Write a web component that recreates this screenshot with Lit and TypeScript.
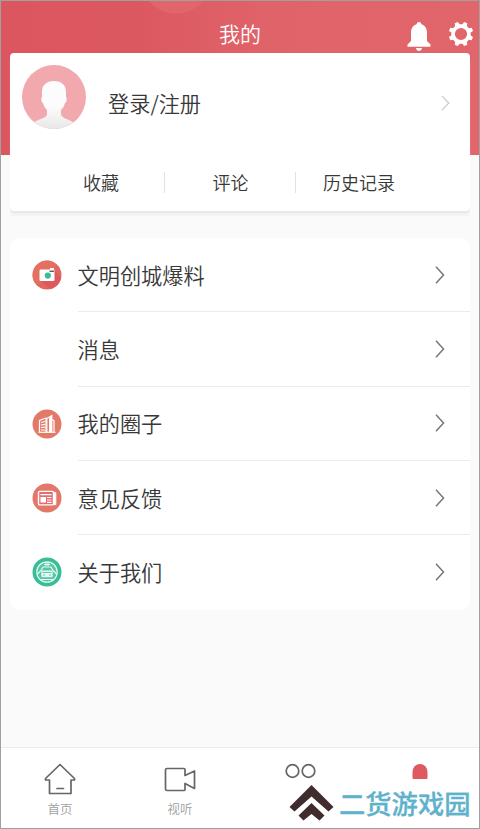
import { LitElement, html, css, svg } from "lit";
import { customElement } from "lit/decorators.js";

const camera = svg`
  <circle cx="15" cy="15" r="14.5" fill="#e1665f"/>
  <path d="M15 .5A14.5 14.5 0 0 0 5 25.500L25 5A14.500 14.500 0 0 0 15 .5Z" fill="#e5765f" opacity=".7"/>
  <path d="M22 10l7 8a14.500 14.500 0 0 1-11 11l-9-8z" fill="#dc5a5e"/>
  <rect x="7.500" y="9.500" width="15" height="11.500" rx="1.200" fill="#fff"/>
  <rect x="18" y="8" width="4" height="2" fill="#fff"/>
  <rect x="17.500" y="10.600" width="4.500" height="1.300" fill="#6b4044"/>
  <circle cx="15.800" cy="15.600" r="3.100" fill="#36bf98"/>`;

const towers = svg`
  <circle cx="15" cy="15" r="14.5" fill="#e37a68"/>
  <g fill="none" stroke="#fff" stroke-width="1.200">
    <path d="M7.500 23V11.500L14 9v14"/>
    <path d="M9 13.500l4-1M9 16l4-.7M9 18.500l4-.4M9 21h4"/>
    <path d="M14.800 23V9.500l5-3V23M20 10.500l2 1V23"/>
    <path d="M6.500 23.300h17"/>
  </g>
  <path d="M17 9l3-2v16h-3z" fill="#fff"/>`;

const paper = svg`
  <circle cx="15" cy="15" r="14.5" fill="#e37769"/>
  <rect x="6.500" y="8.400" width="15" height="13.500" rx="1.200" fill="#e66c72" stroke="#fff" stroke-width="1.400"/>
  <path d="M22 9.500h1.800v12.100H21.500" fill="#fff" stroke="#fff"/>
  <path d="M8.500 11.600h11M15 14.500h4.500M15 17h4.500M15 19.400h4.500" stroke="#fff" stroke-width="1.200"/>
  <rect x="8.500" y="14" width="5.500" height="5.500" fill="#fff"/>`;

const vehicle = svg`
  <circle cx="15" cy="15" r="14.5" fill="#38bd96"/>
  <circle cx="15" cy="15" r="10.200" fill="#54c8a6" stroke="#e6f8f2" stroke-width="1.200"/>
  <path d="M5.500 17l3.500-3.500 2-3.500h8l2 3.500 3.500 3.500" fill="none" stroke="#e6f8f2" stroke-width="1.200"/>
  <path d="M12 7.500h6M14 5v4M16 5v4" stroke="#e6f8f2"/>
  <rect x="9.300" y="13.500" width="11.400" height="6.700" rx="1.200" fill="#e6f8f2"/>
  <path d="M11 18h2M17 18h2M10.500 15.500h9" stroke="#38bd96" stroke-width=".8"/>
  <path d="M8 22.500h14" stroke="#e6f8f2"/>`;

const entries = [
  { label: "文明创城爆料", icon: camera },
  { label: "消息", icon: null },
  { label: "我的圈子", icon: towers },
  { label: "意见反馈", icon: paper },
  { label: "关于我们", icon: vehicle },
];

const gearPath = (() => {
  const points: string[] = [];
  for (let i = 0; i < 8; i++) {
    for (const [offset, radius] of [[-14, 9.8], [-8, 12.4], [8, 12.4], [14, 9.8]]) {
      const angle = ((i * 45 + 22.5 + offset) * Math.PI) / 180;
      points.push(`${(13 + radius * Math.cos(angle)).toFixed(2)} ${(13 + radius * Math.sin(angle)).toFixed(2)}`);
    }
  }
  return `M${points.join("L")}ZM13 6.900a6.100 6.100 0 1 0 0 12.200a6.100 6.100 0 1 0 0-12.200Z`;
})();

@customElement("app-root")
export class AppRoot extends LitElement {
  static styles = css`
    :host {
      display: block;
      font-family: "Noto Sans CJK SC", sans-serif;
      font-weight: 350;
      color: #383838;
    }
    * { box-sizing: border-box; }
    svg { display: block; flex: none; }
    .screen {
      position: relative;
      width: 480px;
      height: 829px;
      border: 1px solid #a0a0a0;
      background: #fafafa;
      display: flex;
      flex-direction: column;
      overflow: hidden;
    }
    .header {
      flex: none;
      height: 153.500px;
      background:
        radial-gradient(circle at 175px -22px, #e1666c 0 34px, transparent 35px),
        radial-gradient(ellipse at 460px -20px, #dd5e64 0 50px, transparent 51px),
        linear-gradient(90deg, #dc565f 0%, #dc5860 28%, #e06369 55%, #e1666b 100%);
    }
    .bar {
      height: 51px;
      display: grid;
      grid-template-columns: 1fr auto 1fr;
      padding: 0 5px;
      color: #fff;
    }
    .title {
      grid-column: 2;
      font-size: 21px;
      line-height: 30px;
      padding-top: 17px;
    }
    .actions {
      display: flex;
      justify-content: flex-end;
      gap: 17px;
      padding-top: 20px;
    }
    .profile {
      flex: none;
      position: relative;
      margin: -102px 9px 0;
      height: 158.500px;
      background: #fff;
      border-radius: 4px;
      box-shadow: 0 2px 0 #e8e8e8, 0 6px 2px -1px #f2f2f2;
    }
    .login {
      height: 101px;
      display: flex;
      align-items: center;
      padding: 0 20.500px 0 12px;
      font-size: 21.200px;
    }
    .login .avatar { margin: -13px 22px 0 0; }
    .login .name { flex: 1; line-height: 30px; margin-top: -1px; }
    .stats {
      display: grid;
      grid-template-columns: 155px 131px 1fr;
      font-size: 18px;
      line-height: 22px;
      text-align: center;
      margin-top: 18px;
    }
    .stat { border-right: 1px solid #e2e2e2; }
    .stat span { display: block; margin-top: -1px; }
    .stat:first-child { padding-left: 28px; }
    .stat:nth-child(2) { padding-left: 1px; }
    .stat:last-child { border: 0; padding-right: 48px; }
    .menu {
      flex: none;
      margin: 27px 9px 0;
      height: 371.500px;
      background: #fff;
      border-radius: 10px;
      display: grid;
      grid-template-rows: repeat(5, 1fr);
    }
    .row {
      display: grid;
      grid-template-columns: 67.500px 1fr;
    }
    .icon { display: flex; align-items: center; padding: 0 0 0 22px; }
    .entry {
      display: flex;
      align-items: center;
      justify-content: space-between;
      padding-right: 25px;
      font-size: 21.200px;
      line-height: 30px;
      border-bottom: 1.500px solid #ebebeb;
    }
    .row:last-child .entry { border-color: transparent; }
    .tabs {
      margin-top: auto;
      flex: none;
      height: 81px;
      background: #fff;
      border-top: 1px solid #ececec;
      display: grid;
      grid-template-columns: 118px 122px 118px 122px;
      font-size: 12.500px;
      line-height: 18px;
      color: #a0a0a0;
    }
    .tab {
      display: flex;
      flex-direction: column;
      align-items: center;
      padding-top: 15px;
      gap: 5px;
    }
    .brand {
      position: absolute;
      right: -1px;
      bottom: -1px;
      width: 200px;
      height: 50px;
      background: #fff;
      display: flex;
      align-items: center;
      padding-left: 9px;
      gap: 5px;
      color: #5fb2cb;
      font-size: 26.300px;
      font-weight: 500;
      line-height: 30px;
      white-space: nowrap;
    }
    .brand span { margin-top: -3px; -webkit-text-stroke: .3px #5fb2cb; }
  `;

  render() {
    return html`
      <div class="screen">
        <div class="header">
          <div class="bar">
            <div class="title">我的</div>
            <div class="actions">
              <svg width="24" height="31" viewBox="0 0 24 31" fill="#fff">
                <path d="M12 1c1.500 0 2.300 1 2.400 2.300C18 4.500 20 7.500 20 11.500V20l3.500 3.500v2.200H.5v-2.200L4 20v-8.500c0-4 2-7 5.600-8.200C9.700 2 10.500 1 12 1ZM9 27h6c-.3 1.800-1.300 2.900-3 2.900S9.300 28.800 9 27Z"/>
              </svg>
              <svg width="26" height="26" viewBox="0 0 26 26">
                <path fill="#fff" fill-rule="evenodd" d=${gearPath}/>
              </svg>
            </div>
          </div>
        </div>

        <div class="profile">
          <div class="login">
            <svg class="avatar" width="64" height="64" viewBox="0 0 64 64">
              <defs>
                <clipPath id="disc"><circle cx="32" cy="32" r="32"/></clipPath>
                <linearGradient id="bust" x2="0" y2="1">
                  <stop offset=".5" stop-color="#fcfcfc"/><stop offset="1" stop-color="#e6e6e6"/>
                </linearGradient>
              </defs>
              <g clip-path="url(#disc)">
                <rect width="64" height="64" fill="#f1a9ad"/>
                <path fill="url(#bust)" d="M32 16c8 0 12.500 4.500 12 12v4c1.200 1 .8 5-1 6-.8 3-2 5-4 7v4.500c1 4 8 4.500 13 8.500v8H11v-8c5-4 13-4.500 14-8.500V45c-2-2-3.200-4-4-7-1.800-1-2.200-5-1-6v-4c-.5-7.500 4-12 12-12Z"/>
              </g>
            </svg>
            <div class="name">登录/注册</div>
            <svg width="9" height="16" viewBox="0 0 9 16" fill="none" stroke="#c8c8c8" stroke-width="1.200"><path d="M1 .8L7.800 8 1 15.200"/></svg>
          </div>
          <div class="stats">
            <div class="stat"><span>收藏</span></div>
            <div class="stat"><span>评论</span></div>
            <div class="stat"><span>历史记录</span></div>
          </div>
        </div>

        <div class="menu">
          ${entries.map(
            (e) => html`
              <div class="row">
                <div class="icon">${e.icon ? html`<svg width="30" height="30" viewBox="0 0 30 30">${e.icon}</svg>` : ""}</div>
                <div class="entry">
                  <span>${e.label}</span>
                  <svg width="10" height="18" viewBox="0 0 10 18" fill="none" stroke="#777" stroke-width="1.500"><path d="M1 .8L8.500 9 1 17.200"/></svg>
                </div>
              </div>`
          )}
        </div>

        <div class="tabs">
          <div class="tab">
            <svg width="32" height="32" viewBox="0 0 32 32" fill="none" stroke="#666" stroke-width="1.700" stroke-linejoin="round" stroke-linecap="round">
              <path d="M16 1.500L1.500 15.500V17H5.500V30.500H27V17H30.500V15.500ZM13 25.500h6.500"/>
            </svg>
            <span>首页</span>
          </div>
          <div class="tab">
            <svg width="32" height="32" viewBox="0 0 32 32" fill="none" stroke="#666" stroke-width="1.700" stroke-linejoin="round">
              <path d="M3 5.500H20Q21 5.500 21 6.500V12.500L30.500 8V25.500L21 20.500V26.500Q21 27.500 20 27.500H3Q1.500 27.500 1.500 26V7Q1.500 5.500 3 5.500Z"/>
            </svg>
            <span>视听</span>
          </div>
          <div class="tab">
            <svg width="32" height="32" viewBox="0 0 32 32" fill="none" stroke="#666" stroke-width="1.700">
              <circle cx="8.500" cy="8" r="6.300"/><circle cx="24.500" cy="8" r="6.300"/>
            </svg>
          </div>
          <div class="tab">
            <svg width="32" height="32" viewBox="0 0 32 32" fill="#de5961">
              <path d="M8.500 9a7.500 8 0 0 1 15 0v5c0 4-3 7-7.500 7s-7.500-3-7.500-7z"/>
            </svg>
          </div>
        </div>

        <div class="brand">
          <svg width="45" height="38" viewBox="0 0 45 38" fill="#412c2d">
            <path d="M22.500 0L44.500 22 39.500 26.500 22.500 11.500 5.500 26.500 .5 22ZM22.500 18L35.500 30.500 30.500 35.500 22.500 29 14.500 35.500 9.500 30.500Z"/>
          </svg>
          <span>二货游戏园</span>
        </div>
      </div>
    `;
  }
}
